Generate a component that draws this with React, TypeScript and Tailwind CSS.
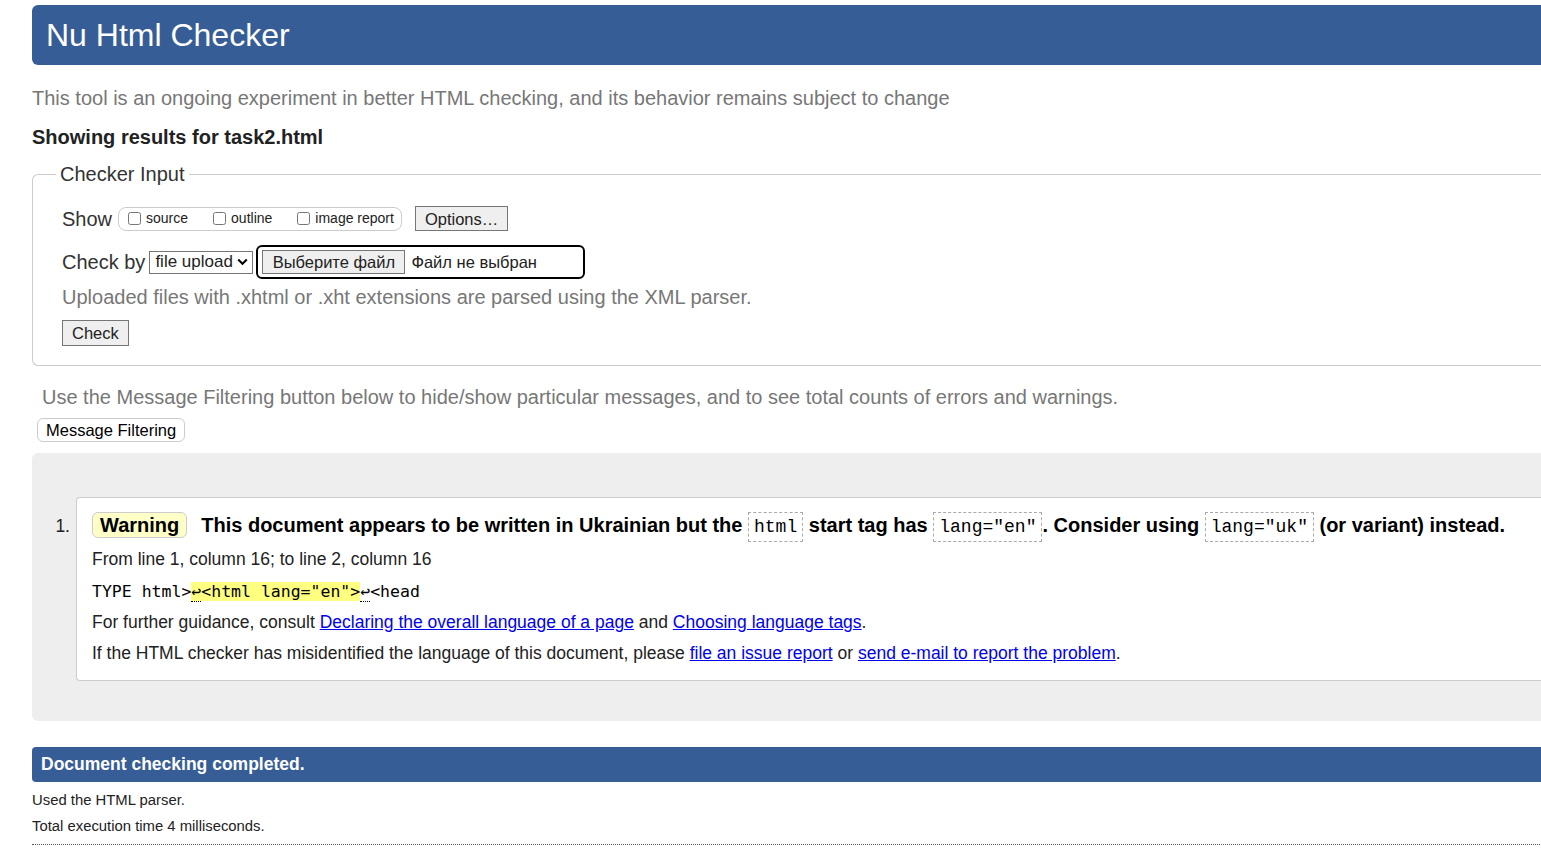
import { useState } from 'react';

const sans = { fontFamily: '"Liberation Sans", Arial, sans-serif' };

function Code({ children }: { children: React.ReactNode }) {
	return (
		<code className="inline-block border border-dashed border-[#aaa] px-[5px] font-['Liberation_Mono',monospace] text-[18px] font-normal leading-[28px]">
			{children}
		</code>
	);
}

function Checkbox({ label }: { label: string }) {
	const [on, setOn] = useState(false);
	return (
		<label className="flex items-center gap-[5px] text-[14px]">
			<input
				type="checkbox"
				checked={on}
				onChange={() => setOn(!on)}
				className="m-0 h-[13px] w-[13px]"
			/>
			{label}
		</label>
	);
}

export default function App() {
	return (
		<div className="w-[1541px] overflow-hidden bg-white text-[#222]" style={sans}>
			<div className="ml-[32px] w-[1540px] pt-[5px] pb-[10px]">
				<h1 className="flex h-[60px] items-center rounded-l-[6px] bg-[#365d95] pl-[14px] text-[32px] font-normal text-white">
					Nu Html Checker
				</h1>

				<p className="mt-[21px] text-[20px] leading-[24px] text-[#777]">
					This tool is an ongoing experiment in better HTML checking, and its behavior remains subject to change
				</p>
				<p className="mt-[15px] text-[20px] font-bold leading-[24px]">Showing results for task2.html</p>

				<fieldset className="mt-[13px] rounded-l-[6px] border border-r-0 border-[#ccc] pt-[20px] pb-[19px]">
					<legend className="ml-[23px] px-[4px] text-[20px] leading-[24px] text-[#333]">Checker Input</legend>

					<div className="pl-[29px]">
						<div className="flex items-center">
							<span className="text-[20px] leading-[24px] text-[#333]">Show</span>
							<div className="ml-[6px] flex h-[24px] items-center gap-[25px] rounded-[8px] border border-[#ccc] pr-[7px] pl-[9px]">
								<Checkbox label="source" />
								<Checkbox label="outline" />
								<Checkbox label="image report" />
							</div>
							<button className="ml-[13px] h-[25px] border border-[#767676] bg-[#efefef] px-[9px] text-[16.5px] leading-[20px]">
								Options…
							</button>
						</div>

						<div className="mt-[14px] flex items-center">
							<span className="text-[20px] leading-[24px] text-[#333]">Check by</span>
							<div className="ml-[4px] flex h-[23px] w-[104px] items-center justify-between border border-[#767676] pr-[4px] pl-[5px] text-[17px]">
								file upload
								<svg width="11" height="8" viewBox="0 0 11 8">
									<path d="M1.2 1.5 5.5 5.8 9.8 1.5" fill="none" stroke="#000" strokeWidth="2" />
								</svg>
							</div>
							<div className="ml-[3px] flex h-[34px] w-[329px] items-center rounded-[6px] border-2 border-black pl-[4px]">
								<span className="flex h-[24px] w-[143px] items-center justify-center border border-[#767676] bg-[#efefef] text-[16.5px]">
									Выберите файл
								</span>
								<span className="ml-[6px] text-[16.5px]">Файл не выбран</span>
							</div>
						</div>

						<p className="mt-[6px] text-[20px] leading-[24px] text-[#777]">
							Uploaded files with .xhtml or .xht extensions are parsed using the XML parser.
						</p>

						<button className="mt-[11px] h-[26px] border border-[#767676] bg-[#efefef] px-[9px] text-[16.5px] leading-[20px]">
							Check
						</button>
					</div>
				</fieldset>

				<p className="mt-[19px] ml-[10px] text-[20px] leading-[24px] text-[#777]">
					Use the Message Filtering button below to hide/show particular messages, and to see total counts of errors and warnings.
				</p>
				<button className="mt-[9px] ml-[5px] h-[24px] rounded-[6px] border border-[#ccc] bg-white px-[8px] text-[16.5px] leading-[20px] text-black">
					Message Filtering
				</button>

				<div className="mt-[10px] rounded-l-[6px] bg-[#eee] pt-[44px] pb-[40px]">
					<div className="flex">
						<span className="w-[38px] pt-[18px] text-right text-[17.5px] leading-[22px]">1.</span>
						<div className="ml-[6px] flex-1 rounded-l-[4px] border border-r-0 border-[#ccc] bg-white pt-[12px] pb-[16px] pl-[15px]">
							<p className="text-[20px] font-bold leading-[30px] text-black">
								<span className="mr-[14px] inline-block rounded-[6px] border border-[#ccc] bg-[#ffffc8] px-[7px] leading-[24px]">
									Warning
								</span>
								This document appears to be written in Ukrainian but the <Code>html</Code> start tag has{' '}
								<Code>lang="en"</Code>. Consider using <Code>lang="uk"</Code> (or variant) instead.
							</p>
							<p className="mt-[6px] text-[17.5px] leading-[22px]">From line 1, column 16; to line 2, column 16</p>
							<p className="mt-[11px] font-['DejaVu_Sans_Mono',monospace] text-[16.5px] leading-[22px] text-black">
								TYPE html&gt;
								<span className="bg-[#ffff80]">
									<span className="border-b border-dotted border-black">↩</span>&lt;html lang="en"&gt;
								</span>
								<span className="border-b border-dotted border-black">↩</span>&lt;head
							</p>
							<p className="mt-[8px] text-[17.5px] leading-[22px]">
								For further guidance, consult{' '}
								<a href="#" className="text-[#00e] underline">
									Declaring the overall language of a page
								</a>{' '}
								and{' '}
								<a href="#" className="text-[#00e] underline">
									Choosing language tags
								</a>
								.
							</p>
							<p className="mt-[9px] text-[17.5px] leading-[22px]">
								If the HTML checker has misidentified the language of this document, please{' '}
								<a href="#" className="text-[#00e] underline">
									file an issue report
								</a>{' '}
								or{' '}
								<a href="#" className="text-[#00e] underline">
									send e-mail to report the problem
								</a>
								.
							</p>
						</div>
					</div>
				</div>

				<h2 className="mt-[26px] flex h-[35px] items-center rounded-l-[4px] bg-[#365d95] pl-[9px] text-[17.5px] font-bold text-white">
					Document checking completed.
				</h2>
				<p className="mt-[9px] text-[14.85px] leading-[18px]">Used the HTML parser.</p>
				<p className="mt-[8px] text-[14.85px] leading-[18px]">Total execution time 4 milliseconds.</p>
				<div className="mt-[9px] border-b border-dotted border-[#555]" />
			</div>
		</div>
	);
}
